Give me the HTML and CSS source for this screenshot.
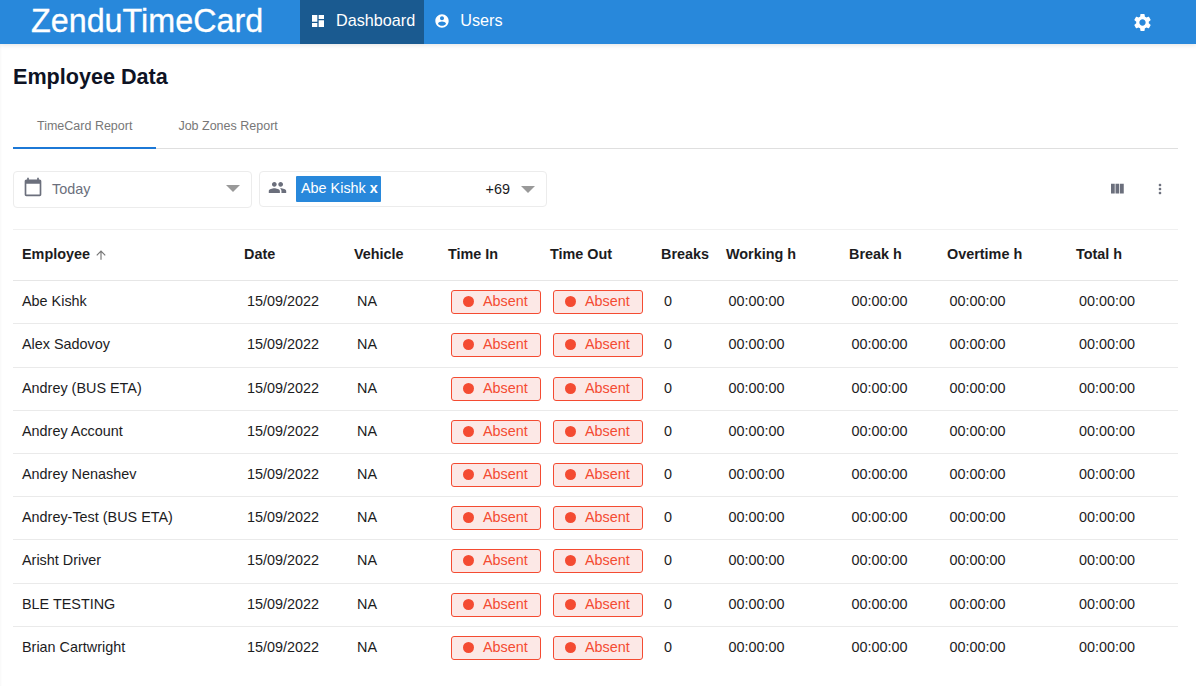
FILE: index.html
```html
<!DOCTYPE html>
<html lang="en">
<head>
    <meta charset="UTF-8">
    <title>ZenduTimeCard</title>
    <link rel="stylesheet" href="styles.css">
</head>
<body>
    <header class="topbar">
        <div class="logo">ZenduTimeCard</div>
        <nav class="nav">
            <a class="nav-item active">
                <svg class="nav-icon" viewBox="0 0 24 24"><path d="M3 13h8V3H3v10zm0 8h8v-6H3v6zm10 0h8V11h-8v10zm0-18v6h8V3h-8z"/></svg>
                Dashboard
            </a>
            <a class="nav-item">
                <svg class="nav-icon" viewBox="0 0 24 24"><path d="M12 2C6.48 2 2 6.48 2 12s4.48 10 10 10 10-4.48 10-10S17.52 2 12 2zm0 3c1.66 0 3 1.34 3 3s-1.34 3-3 3-3-1.34-3-3 1.34-3 3-3zm0 14.2c-2.5 0-4.71-1.28-6-3.22.03-1.99 4-3.08 6-3.08 1.99 0 5.97 1.09 6 3.08-1.29 1.94-3.5 3.22-6 3.22z"/></svg>
                Users
            </a>
        </nav>
        <svg class="gear" viewBox="0 0 24 24"><path d="M19.14 12.94c.04-.3.06-.61.06-.94 0-.32-.02-.64-.07-.94l2.03-1.58a.49.49 0 0 0 .12-.61l-1.92-3.32a.488.488 0 0 0-.59-.22l-2.39.96c-.5-.38-1.03-.7-1.62-.94l-.36-2.54a.484.484 0 0 0-.48-.41h-3.84c-.24 0-.43.17-.47.41l-.36 2.54c-.59.24-1.13.57-1.62.94l-2.39-.96c-.22-.08-.47 0-.59.22L2.74 8.87c-.12.21-.08.47.12.61l2.03 1.58c-.05.3-.09.63-.09.94s.02.64.07.94l-2.03 1.58a.49.49 0 0 0-.12.61l1.92 3.32c.12.22.37.29.59.22l2.39-.96c.5.38 1.03.7 1.62.94l.36 2.54c.05.24.24.41.48.41h3.84c.24 0 .44-.17.47-.41l.36-2.54c.59-.24 1.13-.56 1.62-.94l2.39.96c.22.08.47 0 .59-.22l1.92-3.32c.12-.22.07-.47-.12-.61l-2.01-1.58zM12 15.6c-1.98 0-3.6-1.62-3.6-3.6s1.62-3.6 3.6-3.6 3.6 1.62 3.6 3.6-1.62 3.6-3.6 3.6z"/></svg>
    </header>

    <main class="content">
        <h1>Employee Data</h1>

        <div class="tabs">
            <div class="tab active">TimeCard Report</div>
            <div class="tab">Job Zones Report</div>
        </div>

        <div class="toolbar">
            <div class="filter filter-date">
                <svg class="calendar" viewBox="0 0 24 24"><path d="M20 3h-1V1h-2v2H7V1H5v2H4c-1.1 0-2 .9-2 2v16c0 1.1.9 2 2 2h16c1.1 0 2-.9 2-2V5c0-1.1-.9-2-2-2zm0 18H4V8h16v13z"/></svg>
                <span class="filter-text">Today</span>
                <span class="caret"></span>
            </div>
            <div class="filter filter-people">
                <svg class="people" viewBox="0 0 24 24"><path d="M16 11c1.66 0 2.99-1.34 2.99-3S17.66 5 16 5c-1.66 0-3 1.34-3 3s1.34 3 3 3zm-8 0c1.66 0 2.99-1.34 2.99-3S9.66 5 8 5C6.34 5 5 6.34 5 8s1.34 3 3 3zm0 2c-2.33 0-7 1.17-7 3.5V19h14v-2.5c0-2.33-4.67-3.5-7-3.5zm8 0c-.29 0-.62.02-.97.05 1.16.84 1.97 1.97 1.97 3.45V19h6v-2.5c0-2.33-4.67-3.5-7-3.5z"/></svg>
                <span class="chip">Abe Kishk <b>x</b></span>
                <span class="more">+69</span>
                <span class="caret"></span>
            </div>
            <div class="tools">
                <svg class="tool columns" viewBox="0 0 24 24"><path d="M10 18h5V5h-5v13zm-6 0h5V5H4v13zM16 5v13h5V5h-5z"/></svg>
                <svg class="tool dots" viewBox="0 0 24 24"><path d="M12 8c1.1 0 2-.9 2-2s-.9-2-2-2-2 .9-2 2 .9 2 2 2zm0 2c-1.1 0-2 .9-2 2s.9 2 2 2 2-.9 2-2-.9-2-2-2zm0 6c-1.1 0-2 .9-2 2s.9 2 2 2 2-.9 2-2-.9-2-2-2z"/></svg>
            </div>
        </div>

        <table class="grid">
            <colgroup>
                <col class="c-employee"><col class="c-date"><col class="c-vehicle"><col class="c-in"><col class="c-out">
                <col class="c-breaks"><col class="c-working"><col class="c-break"><col class="c-over"><col class="c-total">
            </colgroup>
            <thead>
                <tr>
                    <th>Employee <svg class="sort" viewBox="0 0 24 24"><path d="M4 12l1.41 1.41L11 7.83V20h2V7.83l5.58 5.59L20 12l-8-8-8 8z"/></svg></th>
                    <th>Date</th><th>Vehicle</th><th>Time In</th><th>Time Out</th>
                    <th>Breaks</th><th>Working h</th><th>Break h</th><th>Overtime h</th><th>Total h</th>
                </tr>
            </thead>
            <tbody id="rows"></tbody>
        </table>
    </main>

    <script>
        const names = ['Abe Kishk', 'Alex Sadovoy', 'Andrey (BUS ETA)', 'Andrey Account', 'Andrey Nenashev',
            'Andrey-Test (BUS ETA)', 'Arisht Driver', 'BLE TESTING', 'Brian Cartwright'];
        const badge = '<span class="badge"><i class="dot"></i>Absent</span>';
        const zero = '00:00:00';

        document.getElementById('rows').innerHTML = names.map(name => `
            <tr>
                <td>${name}</td><td>15/09/2022</td><td>NA</td>
                <td>${badge}</td><td>${badge}</td><td>0</td>
                <td class="tight">${zero}</td><td class="tight">${zero}</td><td class="tight">${zero}</td><td>${zero}</td>
            </tr>`).join('');
    </script>
</body>
</html>
```

FILE: styles.css
```css
html, body {
    height: 686px;
    overflow: hidden;
}

body {
    font-family: "Liberation Sans", Arial, sans-serif;
    margin: 0;
    background-color: #fff;
    color: #1c1c1e;
}

.topbar {
    position: relative;
    display: flex;
    align-items: stretch;
    height: 44px;
    background-color: #2888db;
    color: #fff;
    box-shadow: 0 1px 5px rgba(0, 0, 0, 0.12);
}

.logo {
    width: 300px;
    padding-left: 31px;
    box-sizing: border-box;
    font-size: 32.3px;
    line-height: 42px;
    -webkit-text-stroke: 0.3px #fff;
}

.nav {
    display: flex;
}

.nav-item {
    display: flex;
    align-items: center;
    gap: 10px;
    padding: 0 9px 3px 10px;
    font-size: 16.2px;
}

.nav-item.active {
    background-color: #1a5a90;
}

.nav-icon {
    width: 16px;
    height: 16px;
    fill: #fff;
}

.gear {
    width: 21px;
    height: 21px;
    fill: #fff;
    margin: 12px 43px 0 auto;
}

.content {
    height: 642px;
    padding: 0 18px 0 13px;
    box-shadow: inset 2px 0 2px -1px rgba(0, 0, 0, 0.03);
}

h1 {
    margin: 0;
    padding-top: 20px;
    font-size: 21.6px;
    line-height: 25px;
    color: #0e1324;
}

.tabs {
    display: flex;
    margin-top: 15px;
    height: 44px;
    border-bottom: 1px solid #dfdfdf;
}

.tab {
    padding: 0 22px;
    font-size: 12.5px;
    line-height: 44px;
    color: #777;
}

.tab.active {
    padding: 0 24px;
    border-bottom: 2px solid #1c78d6;
    height: 43px;
}

.toolbar {
    display: flex;
    align-items: flex-start;
    gap: 7px;
    margin-top: 22px;
    height: 58px;
}

.filter {
    display: flex;
    align-items: center;
    box-sizing: border-box;
    border: 1px solid #ececec;
    border-radius: 4px;
    font-size: 14.4px;
}

.filter-date {
    width: 239px;
    height: 37px;
    padding: 0 11px 2px 9px;
}

.filter-people {
    width: 288px;
    height: 36px;
    padding: 0 11px 0 8px;
}

.calendar {
    width: 20px;
    height: 20px;
    fill: #6b6f7c;
    margin: -4px 9px 0 0;
}

.filter-text {
    color: #6b6f7c;
}

.people {
    width: 19px;
    height: 19px;
    fill: #6b6f7c;
    margin: -3px 9px 0 0;
}

.chip {
    padding: 0 3px 0 5px;
    height: 26px;
    line-height: 24px;
    background-color: #2888db;
    color: #fff;
    border-radius: 1px;
}

.more {
    margin-left: auto;
    margin-right: 11px;
    color: #1c1c1e;
}

.caret {
    width: 0;
    height: 0;
    border-left: 7px solid transparent;
    border-right: 7px solid transparent;
    border-top: 7px solid #999;
}

.filter-date .caret {
    margin-left: auto;
}

.tools {
    display: flex;
    align-items: center;
    margin-left: auto;
    height: 36px;
}

.tool {
    fill: #6b6f7c;
}

.columns {
    width: 18px;
    height: 18px;
    margin-right: 26px;
}

.dots {
    width: 16px;
    height: 16px;
    margin-right: 10px;
}

.grid {
    width: 1165px;
    border-collapse: collapse;
    table-layout: fixed;
    border-top: 1px solid #f0f0f0;
    font-size: 14.4px;
}

.c-employee { width: 222px; }
.c-date { width: 110px; }
.c-vehicle { width: 94px; }
.c-in { width: 102px; }
.c-out { width: 111px; }
.c-breaks { width: 65px; }
.c-working { width: 123px; }
.c-break { width: 98px; }
.c-over { width: 129px; }
.c-total { width: 111px; }

th {
    height: 48.2px;
    padding: 0 0 2px 9px;
    text-align: left;
    font-weight: bold;
    border-bottom: 1px solid #e6e6e6;
}

td {
    height: 40.2px;
    padding: 0 0 2px 12px;
    border-bottom: 1px solid #eaeaea;
}

td:first-child {
    padding-left: 9px;
}

td.tight {
    padding-left: 11.4px;
}

tr:last-child td {
    border-bottom: none;
}

.sort {
    width: 14px;
    height: 14px;
    fill: #777;
    vertical-align: -3px;
}

.badge {
    display: flex;
    align-items: center;
    box-sizing: border-box;
    width: 90px;
    height: 24px;
    padding: 0 0 2px 11px;
    border: 1px solid #f44b32;
    border-radius: 3px;
    background-color: #fce8e6;
    color: #f44b32;
    position: relative;
    top: 1px;
}

.dot {
    width: 11px;
    height: 11px;
    margin: 1px 9px 0 0;
    border-radius: 50%;
    background-color: #f44b32;
}
```
